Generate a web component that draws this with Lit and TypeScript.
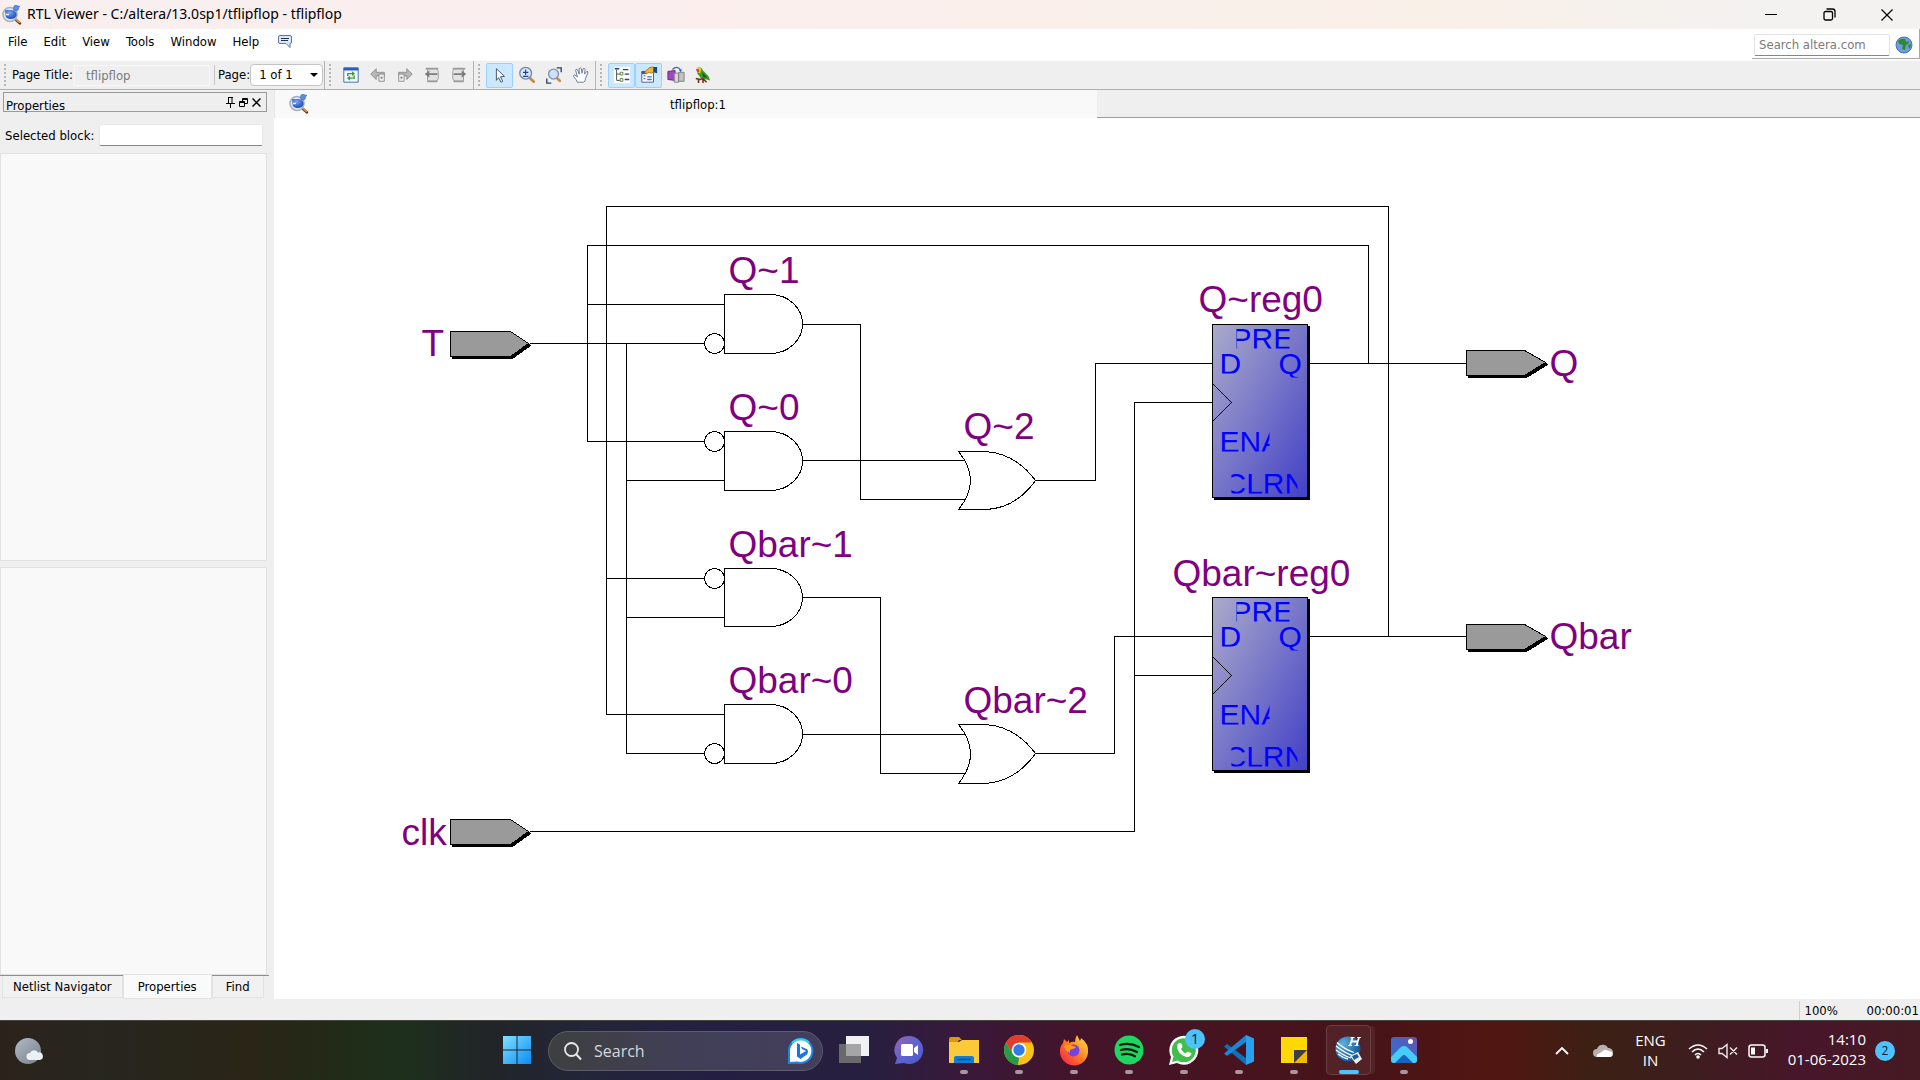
import { LitElement, html, svg, css, nothing } from "lit";
import { customElement, property } from "lit/decorators.js";

/* ---------- shared icons ---------- */

const rtlIcon = (id: string) => html`<svg class="app-icon" viewBox="0 0 20 20" width="20" height="20" aria-hidden="true">
  <defs>
    <radialGradient id=${id} cx="0.4" cy="0.3" r="0.8">
      <stop offset="0" stop-color="#7fa8ee" /><stop offset="0.6" stop-color="#3566cc" /><stop offset="1" stop-color="#27489c" />
    </radialGradient>
  </defs>
  <path d="M13.500 14.500l4.500 4" stroke="#6b3d14" stroke-width="2.400" stroke-linecap="round" />
  <path d="M13.500 14l4 3.300" stroke="#d99a4e" stroke-width="1.500" stroke-linecap="round" />
  <circle cx="8" cy="9.500" r="7" fill="#dfe7f2" stroke="#a4afbf" stroke-width="1.500" />
  <path d="M3 5h7q5 1 4.500 5.500q-1.500 4-6.500 3.500q-4.500-.5-4.500-4z" fill="url(#${id})" />
  <path d="M4 9.500h3" stroke="#eef3ff" stroke-width="1.500" />
  <path d="M12 1q2-1.500 4 0l2 .5l-1.500 1q.5 3-2 3.500q-3 .5-3-2z" fill="#5b8be2" stroke="#3c68bd" stroke-width=".6" />
</svg>`;

const menuNote = html`<svg viewBox="0 0 16 16" width="16" height="16" aria-hidden="true">
  <path d="M3 1.500h10q1.500 0 1.500 1.500v5q0 1.500-1.500 1.500v4l-4-4h-6q-1.500 0-1.500-1.500v-5q0-1.500 1.500-1.500z" fill="#dbe7fa" stroke="#5d7696" />
  <path d="M4 4.500h8M4 6.500h7" stroke="#22334f" />
</svg>`;

const globe = html`<svg viewBox="0 0 18 18" width="18" height="18" aria-hidden="true">
  <circle cx="9" cy="9" r="8" fill="#6f9ce8" stroke="#4a6fae" />
  <path d="M3 5q3-3 7-2l1 3l2-1l1 2l-3 2l-1 5l-3-1l1-4l-4-1z" fill="#2f8a2c" />
  <path d="M13 9l3-1q0 3-2 5z" fill="#2f8a2c" />
</svg>`;

const toolbarIcons: Record<string, unknown> = {
  refresh: svg`<path d="M2 2h16v16H2z" fill="#f4f9ff" stroke="#3564ad"/><path d="M2 2h16v3H2z" fill="#2a5cc4"/>
    <path d="M6.500 11V8.500H12M13.500 10.500V13.500H8" fill="none" stroke="#3f9d3b" stroke-width="1.600"/><path d="M11 5.500l3.500 3-3.500 3zM9 10.500l-3.500 3 3.500 3z" fill="#3f9d3b"/>`,
  back: svg`<path d="M2 9l6-6v4h9v4H8v4z" fill="#b9b9b9" stroke="#8b8b8b"/><path d="M11 9h6v8h-6z" fill="#eee" stroke="#8b8b8b"/><path d="M13 12h2v2h-2z" fill="#777"/>`,
  forward: svg`<path d="M18 9l-6-6v4H3v4h9v4z" fill="#b9b9b9" stroke="#8b8b8b"/><path d="M3 9h6v8H3z" fill="#eee" stroke="#8b8b8b"/><path d="M5 12h2v2H5z" fill="#777"/>`,
  up: svg`<path d="M5 3h10l2 3v8l-2 3H5V3z" fill="#e2e2e2" stroke="#9a9a9a"/><path d="M3 3h14M5 17h11" stroke="#9a9a9a" stroke-width="2"/><path d="M2 9l5-4v3h9v2H7v3z" fill="#7d7d7d"/>`,
  down: svg`<path d="M5 3h10v14H5l-2-3V6z" fill="#e2e2e2" stroke="#9a9a9a"/><path d="M3 3h14M4 17h11" stroke="#9a9a9a" stroke-width="2"/><path d="M18 9l-5-4v3H4v2h9v3z" fill="#7d7d7d"/>`,
  pointer: svg`<path d="M6 3l9 8.500-4.500.5 2.500 5-2 1-2.500-5L6 16z" fill="#fff" stroke="#3a4a63"/>`,
  zoom: svg`<path d="M13 13l4.500 4.500" stroke="#c98a45" stroke-width="3" stroke-linecap="round"/><circle cx="8.500" cy="8" r="6.500" fill="#dbe8fb" stroke="#7189ac" stroke-width="1.500"/><path d="M5.500 7h6M8.500 4v6M5.500 11.500h6" stroke="#1f3f94" stroke-width="1.300"/>`,
  fit: svg`<path d="M13 2h5v5M2 14v5h5" fill="none" stroke="#2d4164" stroke-width="1.500"/><path d="M13 13l3.500 3.500" stroke="#c98a45" stroke-width="3" stroke-linecap="round"/><circle cx="9.500" cy="9" r="5.500" fill="#cfdff5" stroke="#7d93b3" stroke-width="1.500"/>`,
  hand: svg`<path d="M6 18q-1-3-4-6-1-2 1-2l3 2-2-7q0-2 2-1l2 5V3q1-2 2.500 0l.5 5 1.500-5q2-1 2 1L14 9l2.500-3q2 0 1 2l-2.500 6q0 3-2 4z" fill="#fff" stroke="#5b6f96"/>`,
  tree: svg`<path d="M1 1h18v18H1z" fill="#fff"/><path d="M4 4v12h4M4 9h4" fill="none" stroke="#3b4b40"/><path d="M2 3h5M11 4h6M13 9h5M13 15h5" stroke="#2b3f8e" stroke-width="1.500"/><path d="M8 7h3v3H8zM8 14h3v3H8z" fill="#fff" stroke="#55803b"/>`,
  props: svg`<path d="M2 6h13v12H2z" fill="#fff" stroke="#3e5790"/><path d="M2 6h6v3H2z" fill="#3e5790"/><path d="M4 11h2M4 14h2M8 12h5M8 15h5" stroke="#4b6cc0" stroke-width="1.500"/><path d="M5 7l5-5 5-1v6l-3 1-3-1-2 2z" fill="#f3b62a" stroke="#7a5510" stroke-width=".7"/><path d="M15 1h4v7l-4-1z" fill="#17439a"/>`,
  cross: svg`<path d="M1 6l8-1v11l-8-1z" fill="#a146c4" stroke="#61257c"/><path d="M8 8h5v10H8z" fill="#d5d5d5" stroke="#7d7d7d"/><path d="M13 7h6v10h-6z" fill="#c3c3c3" stroke="#7d7d7d"/><path d="M6 4q5-5 9 0" fill="none" stroke="#2e67c9" stroke-width="1.500"/><path d="M13 4h4l-2 3z" fill="#2e67c9"/>`,
  parrot: svg`<path d="M3 3q2-3 5-1l2 3 6 6 2 5-4-1-6-1-4-5z" fill="#3d9a2b"/><path d="M3 2q3-2 5 1l-1 5-3-1z" fill="#f2cf2b"/><path d="M2 4l3-1 1 3-2 1z" fill="#dd3a1f"/><path d="M9 7l6 6-5-1z" fill="#14591c"/><path d="M2 14l5 1 3-1 4 4M5 15v4M10 15v4" fill="none" stroke="#6e3218" stroke-width="1.700"/>`,
};

const toolIcon = (name: string) => html`<svg viewBox="0 0 20 20" width="18" height="18" aria-hidden="true">${toolbarIcons[name]}</svg>`;

/* ---------- schematic ---------- */

interface Point { x: number; y: number; }
interface Gate extends Point { name: string; h: number; labelY: number; bubble?: number; }

const WIRES = [
  "M606 714V206H1388V636", "M587 441V245H1368V363", "M587 304H724", "M529 343H704", "M626 343V753H704",
  "M587 441H704", "M626 480H724", "M606 578H704", "M626 617H724", "M606 714H724",
  "M802 324H860V499H968", "M802 460H968", "M802 597H880V773H968", "M802 734H968",
  "M1035 480H1095V363H1212", "M1035 753H1114V636H1212", "M529 831H1134V402H1212", "M1134 675H1212",
  "M1307 363H1466", "M1307 636H1466",
];

const AND_GATES: Gate[] = [
  { name: "Q~1", x: 724, y: 294, h: 59, labelY: 282, bubble: 343 },
  { name: "Q~0", x: 724, y: 431, h: 59, labelY: 419, bubble: 441 },
  { name: "Qbar~1", x: 724, y: 568, h: 58, labelY: 556, bubble: 578 },
  { name: "Qbar~0", x: 724, y: 704, h: 59, labelY: 692, bubble: 753 },
];

const OR_GATES: Gate[] = [
  { name: "Q~2", x: 958, y: 451, h: 58, labelY: 438 },
  { name: "Qbar~2", x: 958, y: 724, h: 59, labelY: 712 },
];

const REGISTERS = [
  { name: "Q~reg0", x: 1212, y: 324, labelX: 1198, labelY: 311 },
  { name: "Qbar~reg0", x: 1212, y: 597, labelX: 1172, labelY: 585 },
];

const PORTS = [
  { name: "T", x: 450, y: 331, body: 60, tip: 78, labelX: 421, labelY: 355 },
  { name: "clk", x: 450, y: 819, body: 60, tip: 78, labelX: 401, labelY: 844 },
  { name: "Q", x: 1466, y: 350, body: 58, tip: 79, labelX: 1549, labelY: 375 },
  { name: "Qbar", x: 1466, y: 624, body: 58, tip: 79, labelX: 1549, labelY: 648 },
];

/* Pin captions are cut off at the edges of their own cell. */
const PINS = [
  { text: "PRE", x: 24, y: 3, w: 53, h: 21, dx: -5 },
  { text: "D", x: 7, y: 28, w: 21, h: 21, dx: 0 },
  { text: "Q", x: 66, y: 28, w: 24, h: 25, dx: 0 },
  { text: "ENA", x: 7, y: 106, w: 50, h: 21, dx: 0 },
  { text: "CLRN", x: 19, y: 148, w: 66, h: 21, dx: -7 },
];

@customElement("rtl-schematic")
export class RtlSchematic extends LitElement {
  static styles = css`
    :host { display: block; background: #fff; min-width: 0; min-height: 0; overflow: hidden; }
    .sheet { display: block; width: 100%; height: 100%; }
    .line { fill: none; stroke: #000; shape-rendering: crispEdges; }
    .gate { fill: #fff; stroke: #000; shape-rendering: crispEdges; }
    .register { fill: url(#reg); stroke: #000; shape-rendering: crispEdges; }
    .port { fill: #9a9a9a; stroke: #000; shape-rendering: crispEdges; }
    .shadow { fill: #000; stroke: #000; shape-rendering: crispEdges; }
    .name { font: 37px "Liberation Sans", Arial, sans-serif; fill: #800080; }
    .pin { font: 30px "Liberation Sans", Arial, sans-serif; fill: #0000ff; }
  `;

  private port(p: (typeof PORTS)[number]) {
    const d = (o: number) =>
      `M${p.x + o} ${p.y + o}h${p.body}L${p.x + p.tip + o} ${p.y + 12 + o}L${p.x + p.body + o} ${p.y + 25 + o}H${p.x + o}z`;
    return svg`<path class="shadow" d=${d(2)} /><path class="port" d=${d(0)} />
      <text class="name" x=${p.labelX} y=${p.labelY}>${p.name}</text>`;
  }

  private andGate(g: Gate) {
    return svg`<path class="gate" d=${`M${g.x} ${g.y}h46a32 ${g.h / 2} 0 0 1 0 ${g.h}h-46z`} />
      <circle class="gate" cx=${g.x - 10} cy=${g.bubble ?? 0} r="10" />
      <text class="name" x=${g.x + 4} y=${g.labelY}>${g.name}</text>`;
  }

  private orGate(g: Gate) {
    return svg`<path class="gate" d=${`M${g.x} ${g.y}h27q30 2 50 29q-20 28 -50 ${g.h - 29}h-27Q${g.x + 24} ${g.y + 29} ${g.x} ${g.y}z`} />
      <text class="name" x=${g.x + 5} y=${g.labelY}>${g.name}</text>`;
  }

  private register(r: (typeof REGISTERS)[number]) {
    return svg`<rect class="shadow" x=${r.x + 2} y=${r.y + 2} width="95" height="173" />
      <rect class="register" x=${r.x} y=${r.y} width="95" height="173" />
      <path class="line" d=${`M${r.x} ${r.y + 59}l19 19l-19 19`} />
      ${PINS.map((p) => svg`<svg x=${r.x + p.x} y=${r.y + p.y} width=${p.w} height=${p.h}><text class="pin" x=${p.dx} y="21">${p.text}</text></svg>`)}
      <text class="name" x=${r.labelX} y=${r.labelY}>${r.name}</text>`;
  }

  render() {
    return html`<svg class="sheet" viewBox="274 118 1646 881" preserveAspectRatio="xMinYMin meet" role="img" aria-label="tflipflop netlist">
      <defs>
        <linearGradient id="reg" x1="0" y1="0" x2="1" y2="1">
          <stop offset="0" stop-color="#ababcb" /><stop offset="1" stop-color="#4240c6" />
        </linearGradient>
      </defs>
      <g transform="translate(.5 .5)">
        ${WIRES.map((d) => svg`<path class="line" d=${d} />`)}
        ${PORTS.map((p) => this.port(p))}
        ${AND_GATES.map((g) => this.andGate(g))}
        ${OR_GATES.map((g) => this.orGate(g))}
        ${REGISTERS.map((r) => this.register(r))}
      </g>
    </svg>`;
  }
}

/* ---------- desktop taskbar ---------- */

const appIcons: Record<string, unknown> = {
  start: svg`<defs><linearGradient id="win" x1="0" y1="0" x2="1" y2="1"><stop offset="0" stop-color="#7fe0ff"/><stop offset="1" stop-color="#0a8cf5"/></linearGradient></defs>
    <path d="M1 1h13.500v13.500H1zM15.500 1H29v13.500H15.500zM1 15.500h13.500V29H1zM15.500 15.500H29V29H15.500z" fill="url(#win)"/>`,
  tasks: svg`<path d="M0 9h22v19H0z" fill="#6a6a6c"/><path d="M7 1h23v20H7z" fill="#f1f1f1"/><path d="M7 9h15v12H7z" fill="#a5a5a7"/>`,
  chat: svg`<defs><linearGradient id="cht" x1="0" y1="0" x2="1" y2="1"><stop offset="0" stop-color="#9a64b4"/><stop offset=".5" stop-color="#5f63cf"/><stop offset="1" stop-color="#4a58c8"/></linearGradient></defs>
    <path d="M15 1a14 14 0 1 1-5 27L1 29l2-6A14 14 0 0 1 15 1z" fill="url(#cht)"/><rect x="7" y="9" width="12" height="12" rx="1.500" fill="#fff"/><path d="M20 13l4-3v10l-4-3z" fill="#fff"/>`,
  folder: svg`<path d="M0 4q0-2 2-2h8l3 3h-3l-2 3H0z" fill="#e09a00"/><path d="M0 7h10l3-2h17v23H0z" fill="#fcc93a"/><path d="M5 28v-5q0-2 2-2h16q2 0 2 2v5z" fill="#0f7fd6"/><path d="M8 24.500h14" stroke="#0a4f93" stroke-width="1.500"/>`,
  chrome: svg`<circle cx="15" cy="15" r="15" fill="#fbc116"/><path d="M2 7.500L9 19l6 4-1 7A15 15 0 0 1 2 7.500z" fill="#269b48"/><path d="M2 7.500A15 15 0 0 1 28 7.500H15L8.500 18z" fill="#e33b2e"/><circle cx="15" cy="15" r="7.300" fill="#fff"/><circle cx="15" cy="15" r="5.700" fill="#2f7bea"/>`,
  firefox: svg`<defs><linearGradient id="ffx" x1="1" y1="0" x2="0" y2="1"><stop offset="0" stop-color="#fff04a"/><stop offset=".5" stop-color="#ff7a24"/><stop offset="1" stop-color="#f2154f"/></linearGradient></defs>
    <path d="M4 8l1-4 3 3 2-2v3q4-2 6-1 0-4 2-7l3 6q1-2 1-3 8 6 7 14a14 14 0 0 1-28-1q0-5 3-8z" fill="url(#ffx)"/><circle cx="14.500" cy="15.500" r="6" fill="#7542e5"/><path d="M5 11q4-3 9 0l3 1q-1 2-4 2-3 1-2 4-5-2-6-7z" fill="#ff9a1f"/>`,
  spotify: svg`<circle cx="15" cy="15" r="14.500" fill="#1ed760"/><path d="M6 10q9.500-3 19 2M7 15q8-2.500 16 2M8 19.500q7-2 13 1.700" fill="none" stroke="#0b1a10" stroke-width="2.300" stroke-linecap="round"/>`,
  whatsapp: svg`<path d="M0 30l2-8A14.500 14.500 0 1 1 8 28z" fill="#fff"/><path d="M3 27l1.500-5.500a12 12 0 1 1 4 4z" fill="#41bd4b"/><path d="M10 8q2-1 3 2l.500 2-1.500 2q1.500 3 4.500 4.500l2-2 3.500 1.500q1 .500 0 2-2 3-6 1.500Q9 19 8 12q0-3 2-4z" fill="#fff"/>
    <circle cx="26" cy="4" r="10" fill="#4cc2ff"/><text x="26" y="9" class="count">1</text>`,
  code: svg`<path d="M3 9L0 11.500 22 30v-7z" fill="#1070b8"/><path d="M22 0v7L3 21l-3-2.500z" fill="#1a86d4"/><path d="M22 0l8 3.500v23L22 30z" fill="#29a1ee"/>`,
  notes: svg`<path d="M2 2h26v13H15v13H2z" fill="#ffd800"/><path d="M15 28V15h13z" fill="#3c3f45"/><path d="M15 28l13-13v13z" fill="#f2bb00"/>`,
  quartus: svg`<defs><radialGradient id="qts" cx=".3" cy=".3" r=".8"><stop offset="0" stop-color="#5fb0e0"/><stop offset="1" stop-color="#0b4f92"/></radialGradient></defs>
    <circle cx="14" cy="14" r="12.500" fill="url(#qts)"/><path d="M2 11q10 8 18 10M2 15q8 6 15 8M4 19q5 4 10 5M3 7.500q7 6.500 17 10" fill="none" stroke="#fff" stroke-width="1.300"/><path d="M18.500 2.500l-2.500 8M25 2.500l-2.500 8M17.500 6.500h6" stroke="#fff" stroke-width="1.800"/><path d="M16.500 2.500h4M23 2.500h4M14 10.500h4M20.500 10.500h4" stroke="#fff"/><path d="M16 21l8-4 4 7-6 5z" fill="#e8eef2"/><path d="M18 21l5-2 2 3-5 3z" fill="#1d5e92"/>`,
  photos: svg`<defs><linearGradient id="pho" x1="0" y1="1" x2="1" y2="0"><stop offset="0" stop-color="#1d79d8"/><stop offset="1" stop-color="#6c4fae"/></linearGradient></defs>
    <rect x="2" y="2" width="26" height="26" rx="3" fill="url(#pho)"/><path d="M2 22l10-10q3-2 6 0l10 10v3q0 3-3 3H5q-3 0-3-3z" fill="#46cdf5"/><path d="M6 28l7-7q2-2 4 0l7 7z" fill="#1563c2"/><circle cx="21.500" cy="6.500" r="2.500" fill="#fff"/>`,
};

const RUNNING: { id: string; title: string; state: "idle" | "open" | "active" }[] = [
  { id: "tasks", title: "Task View", state: "idle" },
  { id: "chat", title: "Chat", state: "idle" },
  { id: "folder", title: "File Explorer", state: "open" },
  { id: "chrome", title: "Google Chrome", state: "open" },
  { id: "firefox", title: "Firefox", state: "open" },
  { id: "spotify", title: "Spotify", state: "open" },
  { id: "whatsapp", title: "WhatsApp", state: "open" },
  { id: "code", title: "Visual Studio Code", state: "open" },
  { id: "notes", title: "Sticky Notes", state: "open" },
  { id: "quartus", title: "Quartus II", state: "active" },
  { id: "photos", title: "Photos", state: "open" },
];

@customElement("desktop-taskbar")
export class DesktopTaskbar extends LitElement {
  static styles = css`
    :host {
      display: grid; grid-template-columns: 1fr auto 1fr; height: 60px; box-sizing: border-box;
      border-top: 1px solid #46443f; color: #fff; font: 15px/20px "Open Sans", "Noto Sans", sans-serif;
      background: linear-gradient(90deg, #2b231b 0, #27261f 5%, #2a2517 13%, #202c17 18%, #1d301c 21%, #212527 25%, #23253a 31%,
        #241f42 37%, #271f40 45%, #38193a 50%, #43142a 56%, #471320 64%, #471318 71%, #511611 78%, #3c2014 83%, #3d1d1e 88%, #48162a 94%, #451a22 100%);
    }
    button { appearance: none; border: 0; margin: 0; padding: 0; background: none; color: inherit; font: inherit; box-sizing: border-box; }
    svg { display: block; overflow: visible; }
    .weather { justify-self: start; align-self: center; margin-left: 14px; }
    .apps { display: flex; align-items: stretch; }
    .app { width: 55px; display: flex; flex-direction: column; align-items: center; gap: 5px; padding-top: 14px; }
    .dot { width: 8px; height: 4px; border-radius: 2px; background: #a8959d; }
    .active { width: 45px; margin: 4px 5px 5px; padding-top: 9px; border: 1px solid #fff2; border-radius: 5px; background: #fff1; box-shadow: 5px 0 0 -1px #fff1; }
    .active .dot { width: 20px; background: #4cc2ff; }
    .search {
      display: flex; align-items: center; align-self: center; gap: 12px; box-sizing: border-box; width: 275px; height: 40px;
      margin: 0 3px 0 4px; padding: 0 8px 0 15px; border-radius: 20px; border: 1px solid #5d5b6c;
      background: linear-gradient(90deg, #3d403f, #413f58 50%, #433e5c);
    }
    .search input { flex: 1; min-width: 0; border: 0; padding: 0; background: none; outline: 0; color: #fff; font: 16px/24px "Open Sans", "Noto Sans", sans-serif; }
    .search input::placeholder { color: #d6d6da; opacity: 1; }
    .tray { display: flex; justify-content: flex-end; align-items: center; padding-right: 25px; }
    .chevron { margin-right: 24px; }
    .cloud { margin-right: 22px; }
    .lang { margin-right: 22px; padding-bottom: 2px; text-align: center; }
    .net { display: flex; align-items: center; gap: 10px; margin-right: 20px; }
    .clock { text-align: right; margin-right: 9px; padding-bottom: 4px; }
    .lang span, .clock span { display: block; }
    .alerts { width: 20px; height: 20px; border-radius: 10px; background: #4cc2ff; color: #10202c; font-size: 12px; }
    .count { font: 14px "Open Sans", "Noto Sans", sans-serif; fill: #10202c; text-anchor: middle; }
  `;

  render() {
    return html`
      <button class="weather" aria-label="Weather">
        <svg viewBox="0 0 30 28" width="30" height="28">
          <defs><linearGradient id="moon" x1="0" y1="0" x2="1" y2="1"><stop offset="0" stop-color="#b4bcc6" /><stop offset="1" stop-color="#747e8a" /></linearGradient></defs>
          <circle cx="14" cy="14" r="13" fill="url(#moon)" />
          <path d="M16 23a3.500 3.500 0 0 1 0-7a4.500 4.500 0 0 1 8-.500a3.500 3.500 0 0 1 2 7.500z" fill="#edf0f3" />
        </svg>
      </button>
      <nav class="apps" aria-label="Taskbar">
        <button class="app" aria-label="Start"><svg viewBox="0 0 30 30" width="30" height="30">${appIcons.start}</svg></button>
        <label class="search">
          <svg viewBox="0 0 18 18" width="18" height="18" aria-hidden="true"><circle cx="7.500" cy="7.500" r="6.500" fill="none" stroke="#e8e8ea" stroke-width="1.800" /><path d="M12 12l5 5.500" stroke="#e8e8ea" stroke-width="2" /></svg>
          <input type="text" placeholder="Search" aria-label="Search" />
          <svg viewBox="0 0 26 26" width="26" height="26" aria-hidden="true">
            <path d="M13 1a12 12 0 1 1-4 23.500L1 25V13A12 12 0 0 1 13 1z" fill="#fff" stroke="#1a86ea" stroke-width="2" />
            <path d="M4 5a12 12 0 0 1 17-.500" fill="none" stroke="#36cdf0" stroke-width="2" />
            <path d="M9 5l3 1.500v10L18 13l-4-2-1-2.500 6.500 3q1.500 4-2 6l-5 3.500L9 18.500z" fill="#1c72e6" />
          </svg>
        </label>
        ${RUNNING.map((a) => html`
          <button class="app ${a.state}" aria-label=${a.title}>
            <svg viewBox="0 0 30 30" width="30" height="30">${appIcons[a.id]}</svg>
            ${a.state === "idle" ? nothing : html`<span class="dot"></span>`}
          </button>`)}
      </nav>
      <div class="tray">
        <button class="chevron" aria-label="Show hidden icons"><svg viewBox="0 0 14 8" width="14" height="8"><path d="M1 7l6-6 6 6" fill="none" stroke="#fff" stroke-width="1.800" /></svg></button>
        <button class="cloud" aria-label="OneDrive"><svg viewBox="0 0 20 14" width="20" height="14"><path d="M4 13a4 4 0 0 1 0-8a6 6 0 0 1 11-1a4.500 4.500 0 0 1 1 9z" fill="#b9b0ae" /><path d="M4 13q-1-3 3-4l5-3.500 7 2.500q2.500 5-3 5z" fill="#fff" /></svg></button>
        <button class="lang"><span>ENG</span><span>IN</span></button>
        <button class="net" aria-label="Network, volume and battery">
          <svg viewBox="0 0 20 16" width="20" height="16"><path d="M1 6q9-8 18 0M4 9q6-6 12 0M7 12q3-3 6 0" fill="none" stroke="#fff" stroke-width="1.600" /><circle cx="10" cy="14" r="1.800" fill="#fff" /></svg>
          <svg viewBox="0 0 20 16" width="20" height="16"><path d="M1 5.500h3L9 1.500v13L4 10.500H1zM12 4.500l7 7M19 4.500l-7 7" fill="none" stroke="#f0e8e8" stroke-width="1.400" /></svg>
          <svg viewBox="0 0 20 16" width="20" height="16"><rect x="1" y="2" width="16" height="12" rx="2.500" fill="none" stroke="#fff" stroke-width="1.500" /><path d="M3 4.500h4v7H3zM18 6h2v4h-2z" fill="#fff" /></svg>
        </button>
        <button class="clock"><span>14:10</span><span>01-06-2023</span></button>
        <button class="alerts" aria-label="2 notifications">2</button>
      </div>`;
  }
}

/* ---------- toolbar button ---------- */

@customElement("tool-group")
export class ToolGroup extends LitElement {
  @property({ attribute: false }) tools: { icon: string; title: string; on?: boolean }[] = [];

  static styles = css`
    :host { display: flex; align-items: center; }
    .tool { appearance: none; width: 27px; height: 25px; padding: 0; margin: 0; border: 1px solid transparent; border-radius: 2px; background: none; display: grid; place-items: center; }
    .on { background: #cce8ff; border-color: #99d1ff; }
  `;

  render() {
    return this.tools.map((t) => html`<button class="tool ${t.on ? "on" : ""}" aria-label=${t.title}>${toolIcon(t.icon)}</button>`);
  }
}

/* ---------- window ---------- */

@customElement("app-root")
export class AppRoot extends LitElement {
  static styles = css`
    :host {
      display: grid; grid-template-rows: auto auto auto minmax(0, 1fr) auto auto; height: 100vh; overflow: hidden;
      background: #efefef; color: #000; font: 13px/16px "DejaVu Sans Condensed", "Open Sans", sans-serif;
    }
    button, input, select { appearance: none; font: inherit; color: inherit; margin: 0; padding: 0; border: 0; background: none; border-radius: 0; box-sizing: border-box; outline: 0; white-space: nowrap; }
    svg { display: block; flex: none; }
    h1, h2 { margin: 0; font: inherit; }

    .titlebar { display: flex; align-items: center; height: 29px; padding: 0 4px 0 2px; background: linear-gradient(90deg, #f9efee, #fbeeee 35%, #f9f0e8 75%, #f3f2f1 93%); }
    .titlebar h1 { flex: 1; margin-left: 5px; padding-bottom: 1px; font: 14px/20px "Noto Sans", "Open Sans", sans-serif; }
    .caption { width: 58px; height: 29px; display: grid; place-items: center; }

    .menubar { display: flex; height: 31px; background: #fff; }
    .menus { flex: 1; display: flex; align-items: center; height: 25px; }
    .menus button { padding: 0 8px; }
    .menus .note { padding-left: 10px; }
    .web { display: flex; align-items: center; gap: 5px; height: 30px; box-sizing: border-box; padding: 2px 6px 0 2px; border: solid #a8a8a8; border-width: 0 1px 1px 0; }
    .web input { width: 136px; height: 22px; padding: 0 4px; border: 1px solid #e4e4e4; border-bottom-color: #868686; border-radius: 2px; background: #fff; }
    .web input::placeholder { color: #7b7b7b; opacity: 1; }

    .toolbar { display: flex; align-items: stretch; height: 30px; box-sizing: border-box; border-top: 1px solid #fafafa; border-bottom: 1px solid #b0b0b0; }
    .band { display: flex; align-items: center; padding: 0 1px 0 4px; border-right: 1px solid #b4b4b4; }
    .band:last-child { border: 0; }
    .grip { width: 2px; height: 23px; background: repeating-linear-gradient(#b5b5b5 0 2px, transparent 2px 4px); margin-right: 6px; }
    .pages label { white-space: nowrap; }
    .page-title { width: 136px; height: 21px; padding: 0 11px; margin: 0 4px 0 1px; border: 1px solid #f8f8f8; color: #7b7b7b; }
    .rule { width: 1px; height: 20px; background: #c6c6c6; margin-right: 3px; }
    .combo { display: grid; align-items: center; }
    .combo select, .combo svg { grid-area: 1 / 1; }
    .combo select { width: 73px; height: 22px; padding-left: 8px; border: 1px solid #c4c4c4; border-radius: 4px; background: #fff; }
    .combo svg { justify-self: end; margin-right: 5px; pointer-events: none; }

    .body { display: grid; grid-template-columns: 274px minmax(0, 1fr); min-height: 0; }
    .dock { display: flex; flex-direction: column; padding: 2px 7px 0 0; min-height: 0; }
    .dock-title { display: flex; align-items: flex-start; gap: 4px; height: 20px; box-sizing: border-box; margin: 0 0 0 3px; padding: 0 5px 0 2px; border: 1px solid #9a9a9a; }
    .dock-title h2 { flex: 1; line-height: 25px; }
    .dock-title button { height: 18px; display: grid; place-items: center; }
    .selected { display: flex; align-items: center; justify-content: space-between; margin: 12px 4px 7px 5px; }
    .selected label { padding-top: 1px; }
    .selected input { width: 164px; height: 22px; border: 1px solid #e8e8e8; border-bottom-color: #868686; border-radius: 2px; background: #fff; }
    .pane { flex: 1; box-sizing: border-box; border: 1px solid #e1e1e1; background: #f9f9f9; }
    .pane + .pane { margin-top: 6px; }
    .dock-tabs { display: flex; align-items: flex-start; height: 23px; margin-right: -2px; padding-left: 2px; border-top: 1px solid #8f8f8f; }
    .dock-tabs button { height: 22px; border: 1px solid #e2e2e2; border-top: 0; background: #f1f1f1; padding: 0 10px; }
    .dock-tabs button:last-child { padding: 0 13px; }
    .dock-tabs .current { height: 24px; margin-top: -1px; padding: 1px 14px 0; background: #fafafa; }

    .doc { display: grid; grid-template-rows: 28px minmax(0, 1fr); min-height: 0; }
    .doc-tabs { display: grid; grid-template-columns: 1fr 1fr; }
    .doc-tab { display: flex; align-items: center; padding: 0 10px 0 14px; background: #f9f9f9; border-left: 1px solid #e6e6e6; text-align: center; }
    .doc-tab span { flex: 1; padding-top: 2px; }
    .doc-rest { border-bottom: 1px solid #9c9c9c; }

    .status { display: flex; justify-content: flex-end; height: 21px; padding-right: 1px; line-height: 19px; }
    .status .zoom { width: 62px; border-left: 1px solid #d0d0d0; padding-left: 4px; margin-top: 2px; }
    .status .time { margin-top: 2px; }
  `;

  render() {
    return html`
      <header class="titlebar">
        ${rtlIcon("app")}
        <h1>RTL Viewer - C:/altera/13.0sp1/tflipflop - tflipflop</h1>
        <button class="caption" aria-label="Minimize"><svg viewBox="0 0 12 12" width="12" height="12"><path d="M0 5.500h12" stroke="#000" /></svg></button>
        <button class="caption" aria-label="Restore"><svg viewBox="0 0 13 13" width="13" height="13"><rect x="1" y="3.500" width="8.500" height="8.500" rx="1.500" fill="none" stroke="#000" stroke-width="1.300" /><path d="M3.500 1h6q2.500 0 2.500 2.500v6" fill="none" stroke="#000" stroke-width="1.300" /></svg></button>
        <button class="caption" aria-label="Close"><svg viewBox="0 0 12 12" width="12" height="12"><path d="M.5 .5l11 11M11.500 .5l-11 11" stroke="#000" stroke-width="1.200" /></svg></button>
      </header>

      <div class="menubar">
        <nav class="menus" aria-label="Menu">
          ${["File", "Edit", "View", "Tools", "Window", "Help"].map((m) => html`<button>${m}</button>`)}
          <button class="note" aria-label="Feedback">${menuNote}</button>
        </nav>
        <div class="web">
          <input type="text" placeholder="Search altera.com" aria-label="Search altera.com" />
          <button aria-label="Go to altera.com">${globe}</button>
        </div>
      </div>

      <div class="toolbar">
        <div class="band pages">
          <span class="grip"></span>
          <label for="page-title">Page Title:</label>
          <input id="page-title" class="page-title" value="tflipflop" disabled />
          <span class="rule"></span>
          <label for="page">Page:</label>
          <span class="combo">
            <select id="page"><option>1 of 1</option></select>
            <svg viewBox="0 0 8 4" width="8" height="4"><path d="M0 0h8l-4 4z" fill="#000" /></svg>
          </span>
        </div>
        <div class="band">
          <span class="grip"></span>
          <tool-group .tools=${[
            { icon: "refresh", title: "Refresh" }, { icon: "back", title: "Back" }, { icon: "forward", title: "Forward" },
            { icon: "up", title: "Previous page" }, { icon: "down", title: "Next page" },
          ]}></tool-group>
        </div>
        <div class="band">
          <span class="grip"></span>
          <tool-group .tools=${[
            { icon: "pointer", title: "Selection tool", on: true }, { icon: "zoom", title: "Zoom tool" },
            { icon: "fit", title: "Fit in window" }, { icon: "hand", title: "Hand tool" },
          ]}></tool-group>
        </div>
        <div class="band">
          <span class="grip"></span>
          <tool-group .tools=${[
            { icon: "tree", title: "Netlist navigator", on: true }, { icon: "props", title: "Properties", on: true },
            { icon: "cross", title: "Cross probe" }, { icon: "parrot", title: "Color settings" },
          ]}></tool-group>
        </div>
      </div>

      <main class="body">
        <aside class="dock">
          <div class="dock-title">
            <h2>Properties</h2>
            <button aria-label="Pin"><svg viewBox="0 0 9 12" width="9" height="12"><path d="M2.500 1v6M2 1.500h5M6 1v6M0 7.500h9M4.500 8v4" fill="none" stroke="#000" /></svg></button>
            <button aria-label="Float"><svg viewBox="0 0 9 9" width="9" height="9"><path d="M.5 3.500h5v5h-5zM0 4.500h6M3.500 3V.5h5v5H6M3 1.500h6" fill="none" stroke="#000" /></svg></button>
            <button aria-label="Close panel"><svg viewBox="0 0 9 9" width="9" height="9"><path d="M.5 .5l8 8M8.500 .5l-8 8" stroke="#000" stroke-width="1.500" /></svg></button>
          </div>
          <div class="selected">
            <label for="block">Selected block:</label>
            <input id="block" type="text" />
          </div>
          <section class="pane" aria-label="Block properties"></section>
          <section class="pane" aria-label="Block details"></section>
          <nav class="dock-tabs" aria-label="Panels">
            <button>Netlist Navigator</button>
            <button class="current">Properties</button>
            <button>Find</button>
          </nav>
        </aside>
        <section class="doc">
          <div class="doc-tabs">
            <button class="doc-tab">${rtlIcon("tab")}<span>tflipflop:1</span></button>
            <div class="doc-rest"></div>
          </div>
          <rtl-schematic></rtl-schematic>
        </section>
      </main>

      <footer class="status"><span class="zoom">100%</span><span class="time">00:00:01</span></footer>
      <desktop-taskbar></desktop-taskbar>`;
  }
}
